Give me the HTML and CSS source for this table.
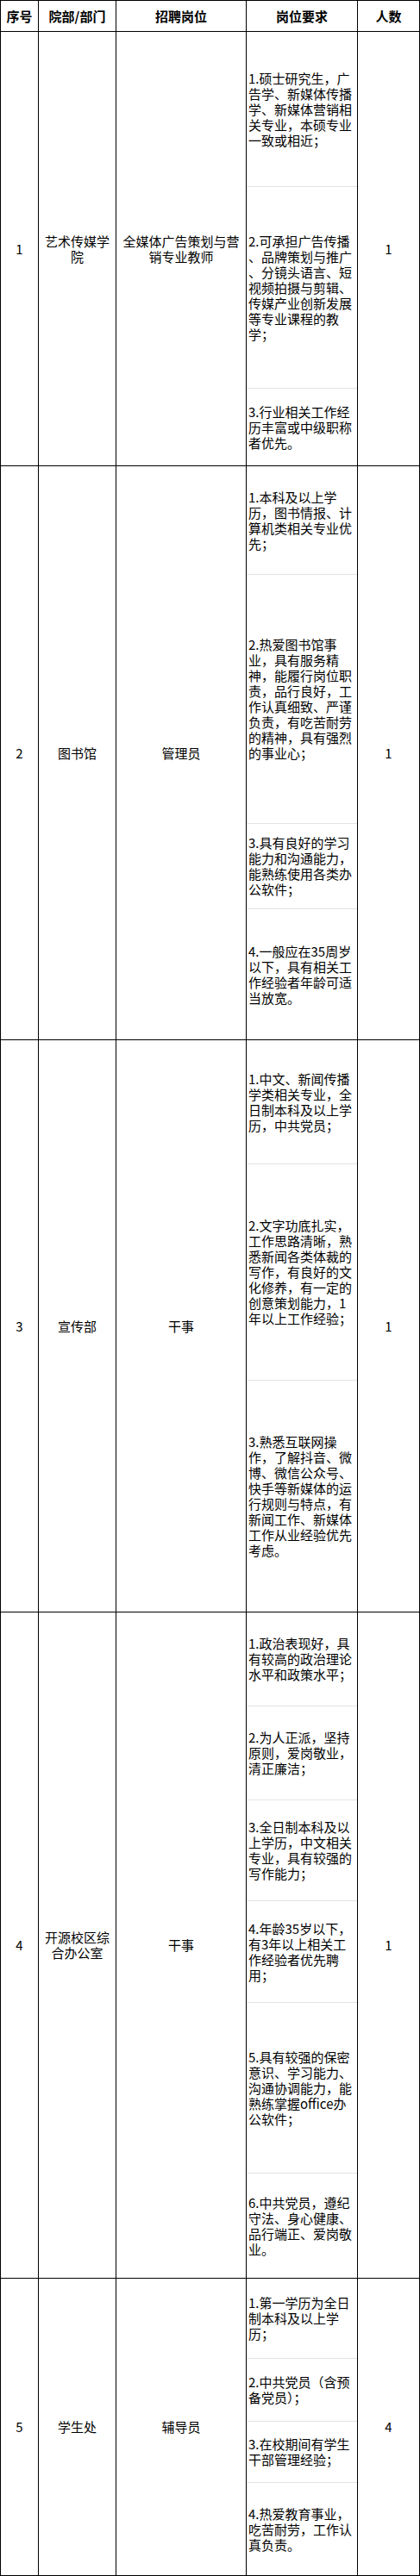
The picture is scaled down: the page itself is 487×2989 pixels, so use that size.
FILE: index.html
```html
<!DOCTYPE html>
<html lang="zh-CN">
<head>
<meta charset="utf-8">
<title>招聘岗位表</title>
<link rel="stylesheet" href="styles.css">
</head>
<body>
<div class="grid">
  <div class="cell head">序号</div>
  <div class="cell head">院部/部门</div>
  <div class="cell head">招聘岗位</div>
  <div class="cell head">岗位要求</div>
  <div class="cell head">人数</div>

  <div class="cell">1</div>
  <div class="cell">艺术传媒学<br>院</div>
  <div class="cell">全媒体广告策划与营<br>销专业教师</div>
  <div class="req">
    <div class="sub" style="height:180px">1.硕士研究生，广<br>告学、新媒体传播<br>学、新媒体营销相<br>关专业，本硕专业<br>一致或相近；</div>
    <div class="sub" style="height:234px">2.可承担广告传播<br>、品牌策划与推广<br>、分镜头语言、短<br>视频拍摄与剪辑、<br>传媒产业创新发展<br>等专业课程的教<br>学；</div>
    <div class="sub" style="height:89px">3.行业相关工作经<br>历丰富或中级职称<br>者优先。</div>
  </div>
  <div class="cell">1</div>

  <div class="cell">2</div>
  <div class="cell">图书馆</div>
  <div class="cell">管理员</div>
  <div class="req">
    <div class="sub" style="height:126px">1.本科及以上学<br>历，图书情报、计<br>算机类相关专业优<br>先；</div>
    <div class="sub" style="height:289px">2.热爱图书馆事<br>业，具有服务精<br>神，能履行岗位职<br>责，品行良好，工<br>作认真细致、严谨<br>负责，有吃苦耐劳<br>的精神，具有强烈<br>的事业心；</div>
    <div class="sub" style="height:99px">3.具有良好的学习<br>能力和沟通能力，<br>能熟练使用各类办<br>公软件；</div>
    <div class="sub" style="height:151px">4.一般应在35周岁<br>以下，具有相关工<br>作经验者年龄可适<br>当放宽。</div>
  </div>
  <div class="cell">1</div>

  <div class="cell">3</div>
  <div class="cell">宣传部</div>
  <div class="cell">干事</div>
  <div class="req">
    <div class="sub" style="height:144px">1.中文、新闻传播<br>学类相关专业，全<br>日制本科及以上学<br>历，中共党员；</div>
    <div class="sub" style="height:251px">2.文字功底扎实，<br>工作思路清晰，熟<br>悉新闻各类体裁的<br>写作，有良好的文<br>化修养，有一定的<br>创意策划能力，1<br>年以上工作经验；</div>
    <div class="sub" style="height:268px">3.熟悉互联网操<br>作，了解抖音、微<br>博、微信公众号、<br>快手等新媒体的运<br>行规则与特点，有<br>新闻工作、新媒体<br>工作从业经验优先<br>考虑。</div>
  </div>
  <div class="cell">1</div>

  <div class="cell">4</div>
  <div class="cell">开源校区综<br>合办公室</div>
  <div class="cell">干事</div>
  <div class="req">
    <div class="sub" style="height:109px">1.政治表现好，具<br>有较高的政治理论<br>水平和政策水平；</div>
    <div class="sub" style="height:109px">2.为人正派，坚持<br>原则，爱岗敬业，<br>清正廉洁；</div>
    <div class="sub" style="height:117px">3.全日制本科及以<br>上学历，中文相关<br>专业，具有较强的<br>写作能力；</div>
    <div class="sub" style="height:118px">4.年龄35岁以下，<br>有3年以上相关工<br>作经验者优先聘<br>用；</div>
    <div class="sub" style="height:198px">5.具有较强的保密<br>意识、学习能力、<br>沟通协调能力，能<br>熟练掌握office办<br>公软件；</div>
    <div class="sub" style="height:121px">6.中共党员，遵纪<br>守法、身心健康、<br>品行端正、爱岗敬<br>业。</div>
  </div>
  <div class="cell">1</div>

  <div class="cell">5</div>
  <div class="cell">学生处</div>
  <div class="cell">辅导员</div>
  <div class="req">
    <div class="sub" style="height:93px">1.第一学历为全日<br>制本科及以上学<br>历；</div>
    <div class="sub" style="height:73px">2.中共党员（含预<br>备党员）；</div>
    <div class="sub" style="height:71px">3.在校期间有学生<br>干部管理经验；</div>
    <div class="sub" style="height:107px">4.热爱教育事业，<br>吃苦耐劳，工作认<br>真负责。</div>
  </div>
  <div class="cell">4</div>
</div>
</body>
</html>
```

FILE: styles.css
```css
html, body {
  margin: 0;
  padding: 0;
  background: #ffffff;
}

body {
  font-family: "Noto Sans CJK SC", "Noto Sans", sans-serif;
  font-size: 15px;
  line-height: 18px;
  color: #000000;
}

.grid {
  display: grid;
  grid-template-columns: 44px 90px 151px 129px 72px;
  width: 487px;
  box-sizing: border-box;
  border-top: 1px solid #000;
  border-left: 1px solid #000;
}

.cell,
.req {
  box-sizing: border-box;
  border-right: 1px solid #000;
  border-bottom: 1px solid #000;
}

.cell {
  display: flex;
  align-items: center;
  justify-content: center;
  text-align: center;
  padding: 0 2px;
}

.head {
  height: 36px;
  font-weight: bold;
}

.req {
  display: flex;
  flex-direction: column;
}

.sub {
  box-sizing: border-box;
  display: flex;
  align-items: center;
  padding: 0 2px;
  white-space: nowrap;
  border-bottom: 1px solid #e3e3e3;
}

.sub:last-child {
  border-bottom: none;
}
```
